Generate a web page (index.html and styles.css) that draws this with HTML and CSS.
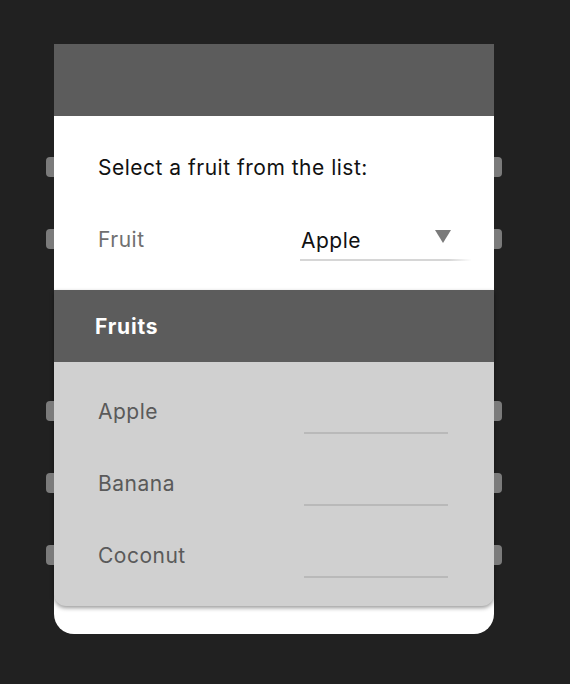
FILE: index.html
```html
<!DOCTYPE html>
<html>
<head>
<meta charset="utf-8">
<link rel="stylesheet" href="styles.css">
</head>
<body>
<div class="card">
  <div class="card-header"></div>
  <div class="card-body">
    <div class="row prompt tabbed">Select a fruit from the list:</div>
    <div class="row field tabbed">
      <span class="label">Fruit</span>
      <div class="select">
        <span class="value">Apple</span>
        <svg class="arrow" width="16" height="13" viewBox="0 0 16 13"><path d="M0 0H16L8 13Z" fill="#7a7a7a"/></svg>
      </div>
    </div>
  </div>
  <div class="menu">
    <div class="menu-header">Fruits</div>
    <div class="menu-list">
      <div class="item tabbed"><span>Apple</span><i class="line"></i></div>
      <div class="item tabbed"><span>Banana</span><i class="line"></i></div>
      <div class="item tabbed"><span>Coconut</span><i class="line"></i></div>
    </div>
  </div>
</div>
</body>
</html>
```
FILE: styles.css
```css
html, body {
  margin: 0;
  padding: 0;
  background: #212121;
  font-family: Inter, "Noto Sans", sans-serif;
}
body {
  padding: 44px 0 0 54px;
}
.card {
  position: relative;
  width: 440px;
  height: 590px;
  background: #ffffff;
  border-radius: 0 0 20px 20px;
  display: flex;
  flex-direction: column;
}
.card-header {
  height: 72px;
  background: #5c5c5c;
}
.card-body {
  display: flex;
  flex-direction: column;
  padding: 15px 0 0 44px;
}
.row {
  position: relative;
  height: 72px;
  display: flex;
  align-items: center;
}
.tabbed::before, .tabbed::after {
  content: "";
  position: absolute;
  top: 50%;
  margin-top: -10px;
  width: 8px;
  height: 20px;
  background: #7b7b7b;
}
.card-body .tabbed::before { left: -52px; border-radius: 4px 0 0 4px; }
.card-body .tabbed::after { right: -8px; border-radius: 0 4px 4px 0; }
.prompt {
  font-size: 21px;
  color: #111;
  letter-spacing: 0.5px;
}
.field .label {
  width: 202px;
  font-size: 21px;
  letter-spacing: 0.5px;
  color: #707070;
}
.select {
  position: relative;
  width: 171px;
  height: 44px;
  display: flex;
  align-items: center;
  justify-content: space-between;
  padding: 4px 0 0 1px;
  box-sizing: border-box;
  border-bottom: 2px solid transparent;
  border-image: linear-gradient(to right, #d6d6d6 0, #d6d6d6 148px, #ffffff 100%) 1;
}
.select .value {
  font-size: 21px;
  letter-spacing: 0.5px;
  color: #111;
}
.select .arrow {
  margin-right: 20px;
  margin-top: -8px;
}
.menu {
  position: absolute;
  left: 0;
  top: 246px;
  width: 440px;
  height: 316px;
  background: #d0d0d0;
  border-radius: 0 0 12px 12px;
  box-shadow: 0 2px 4px rgba(0,0,0,0.4);
  display: flex;
  flex-direction: column;
}
.menu-header {
  height: 72px;
  background: #5c5c5c;
  color: #ffffff;
  font-weight: 700;
  font-size: 21px;
  letter-spacing: 0.8px;
  display: flex;
  align-items: center;
  padding-left: 41px;
}
.menu-list {
  display: flex;
  flex-direction: column;
  padding-top: 13px;
}
.item {
  position: relative;
  height: 72px;
  display: flex;
  align-items: center;
  padding-left: 44px;
  font-size: 21px;
  letter-spacing: 0.5px;
  color: #5a5a5a;
}
.item::before { left: -8px; border-radius: 4px 0 0 4px; }
.item::after { right: -8px; border-radius: 0 4px 4px 0; }
.item .line {
  position: absolute;
  left: 250px;
  width: 144px;
  top: 57px;
  height: 2px;
  background: #b9b9b9;
}
```
